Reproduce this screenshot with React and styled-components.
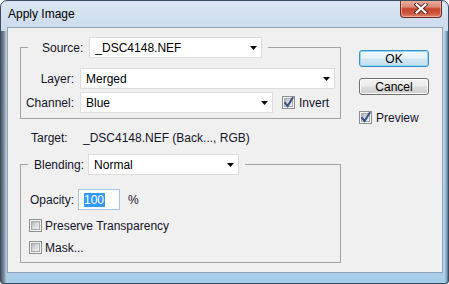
import React from "react";
import styled, { createGlobalStyle } from "styled-components";

const Global = createGlobalStyle`
  html, body { margin: 0; padding: 0; background: #ffffff; }
  body { font-family: "Liberation Sans", Arial, sans-serif; font-size: 12px; }
  * { box-sizing: border-box; }
`;

const Window = styled.div`
  width: 449px;
  height: 284px;
  border: 1px solid #3a4c60;
  border-radius: 7px 7px 3px 3px;
  background:
    linear-gradient(to right, #4f5d6c 0, #7d8c9b 3px, #b3c3d3 5px, rgba(0,0,0,0) 6px) 0 30px / 6px 100% no-repeat,
    linear-gradient(to left, #52718e 0, #8fb3d2 2px, #b8d3ea 4px, rgba(0,0,0,0) 5px) 100% 30px / 5px 100% no-repeat,
    linear-gradient(180deg, #dae6f3 0%, #cbdbec 10%, #c2d4e8 60%, #b2d2ea 92%, #a5cce8 100%);
  display: flex;
  flex-direction: column;
  padding: 0 5px 10px 6px;
  overflow: hidden;
  font-family: "Liberation Sans", Arial, sans-serif;
  font-size: 12px;
`;

const TitleBar = styled.div`
  height: 26px;
  display: flex;
  justify-content: space-between;
  align-items: flex-start;
`;

const Title = styled.div`
  margin: 6px 0 0 1px;
  line-height: 14px;
  color: #000;
`;

const CloseButton = styled.div`
  width: 42px;
  height: 18px;
  margin: -1px 1px 0 0;
  border: 1px solid #6e2b22;
  border-top: none;
  border-radius: 0 0 4px 4px;
  background: linear-gradient(180deg, #ecb2a4 0%, #dc8c79 40%, #c6442e 52%, #cf583f 80%, #de8a70 100%);
  box-shadow: inset 0 0 0 1px rgba(255, 210, 200, 0.5);
  display: flex;
  align-items: center;
  justify-content: center;
`;

const Client = styled.div`
  flex: 1;
  border: 1px solid #8ea3b8;
  background: #f0f0f0;
  display: flex;
  align-items: flex-start;
  color: #14142a;
`;

const LeftColumn = styled.div`
  padding-left: 12px;
  width: 333px;
  display: flex;
  flex-direction: column;
`;

const RightColumn = styled.div`
  margin: 22px 0 0 18px;
  width: 70px;
  display: flex;
  flex-direction: column;
  align-items: flex-start;
`;

const Group = styled.fieldset`
  margin: ${(p) => p.$mt}px 0 0 0;
  padding: 0 0 ${(p) => p.$pb}px 0;
  border: 1px solid #a3a3a3;
  width: 321px;
  min-width: 0;
`;

const Legend = styled.legend`
  margin-left: 7px;
  padding: 0 6px 0 ${(p) => p.$pl}px;
`;

const LegendInner = styled.div`
  display: flex;
  align-items: center;
  gap: ${(p) => p.$gap}px;
  height: 21px;
`;

const Row = styled.div`
  display: flex;
  align-items: center;
  height: 21px;
  margin-top: ${(p) => p.$mt || 0}px;
  padding-left: ${(p) => p.$pl || 0}px;
`;

const RowLabel = styled.span`
  width: ${(p) => p.$w}px;
  text-align: right;
  margin-right: 6px;
  line-height: 14px;
  white-space: nowrap;
`;

const Text = styled.span`
  line-height: 14px;
  white-space: nowrap;
  margin-left: ${(p) => p.$ml || 0}px;
`;

const DropBox = styled.div`
  width: ${(p) => p.$w}px;
  height: 21px;
  background: #ffffff;
  border: 1px solid #dcdcdc;
  display: flex;
  align-items: center;
  justify-content: space-between;
  padding: 0 4px 0 5px;
  color: #000;
  line-height: 14px;
  white-space: nowrap;
`;

const Dropdown = ({ w, value }) => (
  <DropBox $w={w}>
    <span>{value}</span>
    <svg width="7" height="4" viewBox="0 0 7 4">
      <polygon points="0,0 7,0 3.5,4" fill="#000" />
    </svg>
  </DropBox>
);

const CheckRow = styled.div`
  display: flex;
  align-items: center;
  gap: ${(p) => p.$gap || 3}px;
  margin-top: ${(p) => p.$mt || 0}px;
  margin-left: ${(p) => p.$ml || 0}px;
  height: 13px;
`;

const Box = styled.div`
  width: 13px;
  height: 13px;
  flex: none;
  border: 1px solid #8e8f8f;
  background: #f4f4f4;
  padding: 1px;
`;

const BoxInner = styled.div`
  width: 9px;
  height: 9px;
  background: linear-gradient(135deg, #b1b5ba 0%, #d6d8db 45%, #f2f2f3 100%);
  border: 1px solid #a8abaf;
  display: flex;
  align-items: center;
  justify-content: center;
  position: relative;
`;

const CheckMark = styled.svg`
  position: absolute;
  left: -1px;
  top: -2px;
`;

const Checkbox = ({ checked }) => (
  <Box>
    <BoxInner>
      {checked && (
        <CheckMark width="10" height="11" viewBox="0 0 10 11">
          <path d="M1 6 L3.6 9 L8.6 1" stroke="#3b4f8a" strokeWidth="2" fill="none" strokeLinecap="square" />
        </CheckMark>
      )}
    </BoxInner>
  </Box>
);

const Button = styled.div`
  width: 70px;
  height: 17px;
  margin-top: ${(p) => p.$mt || 0}px;
  border: 1px solid ${(p) => (p.$default ? "#3c8fcf" : "#707070")};
  border-radius: 3px;
  background: ${(p) =>
    p.$default
      ? "linear-gradient(180deg, #f1f8fc 0%, #e6f2f9 48%, #d2e7f3 52%, #c6e0ef 100%)"
      : "linear-gradient(180deg, #f2f2f2 0%, #ebebeb 48%, #dddddd 52%, #cfcfcf 100%)"};
  box-shadow: ${(p) => (p.$default ? "inset 0 0 0 1px #8fd6f5" : "inset 0 0 0 1px #fcfcfc")};
  display: flex;
  align-items: center;
  justify-content: center;
  color: #000;
  line-height: 14px;
`;

const TargetRow = styled.div`
  display: flex;
  margin-top: 12px;
  padding-left: 11px;
  line-height: 14px;
`;

const TargetLabel = styled.span`
  width: 52px;
`;

const Input = styled.div`
  width: 42px;
  height: 21px;
  background: #ffffff;
  border: 1px solid #a6c4e6;
  display: flex;
  align-items: center;
  padding-left: 5px;
`;

const Selected = styled.span`
  background: #3399ff;
  color: #ffffff;
  line-height: 14px;
  padding: 0 1px 0 0;
`;

export default function App() {
  return (
    <>
      <Global />
      <Window>
        <TitleBar>
          <Title>Apply Image</Title>
          <CloseButton>
            <svg width="14" height="11" viewBox="0 0 14 11">
              <path d="M2.5 1.5 L11.5 9.5 M11.5 1.5 L2.5 9.5" stroke="#5a2a22" strokeWidth="4" strokeLinecap="square" />
              <path d="M2.5 1.5 L11.5 9.5 M11.5 1.5 L2.5 9.5" stroke="#ffffff" strokeWidth="2.2" strokeLinecap="square" />
            </svg>
          </CloseButton>
        </TitleBar>
        <Client>
          <LeftColumn>
            <Group $mt={9} $pb={5}>
              <Legend $pl={14}>
                <LegendInner $gap={6}>
                  <Text>Source:</Text>
                  <Dropdown w={173} value="_DSC4148.NEF" />
                </LegendInner>
              </Legend>
              <Row $mt={10}>
                <RowLabel $w={53}>Layer:</RowLabel>
                <Dropdown w={255} value="Merged" />
              </Row>
              <Row $mt={3}>
                <RowLabel $w={53}>Channel:</RowLabel>
                <Dropdown w={193} value="Blue" />
                <CheckRow $ml={9} $gap={4}>
                  <Checkbox checked />
                  <Text>Invert</Text>
                </CheckRow>
              </Row>
            </Group>
            <TargetRow>
              <TargetLabel>Target:</TargetLabel>
              <span>_DSC4148.NEF (Back..., RGB)</span>
            </TargetRow>
            <Group $mt={9} $pb={8}>
              <Legend $pl={6}>
                <LegendInner $gap={4}>
                  <Text>Blending:</Text>
                  <Dropdown w={151} value="Normal" />
                </LegendInner>
              </Legend>
              <Row $mt={14} $pl={9}>
                <Text>Opacity:</Text>
                <Text $ml={4} as="div">
                  <Input>
                    <Selected>100</Selected>
                  </Input>
                </Text>
                <Text $ml={8}>%</Text>
              </Row>
              <CheckRow $mt={9} $ml={8}>
                <Checkbox />
                <Text>Preserve Transparency</Text>
              </CheckRow>
              <CheckRow $mt={9} $ml={8}>
                <Checkbox />
                <Text>Mask...</Text>
              </CheckRow>
            </Group>
          </LeftColumn>
          <RightColumn>
            <Button $default>OK</Button>
            <Button $mt={11}>Cancel</Button>
            <CheckRow $mt={16} $gap={4}>
              <Checkbox checked />
              <Text>Preview</Text>
            </CheckRow>
          </RightColumn>
        </Client>
      </Window>
    </>
  );
}
